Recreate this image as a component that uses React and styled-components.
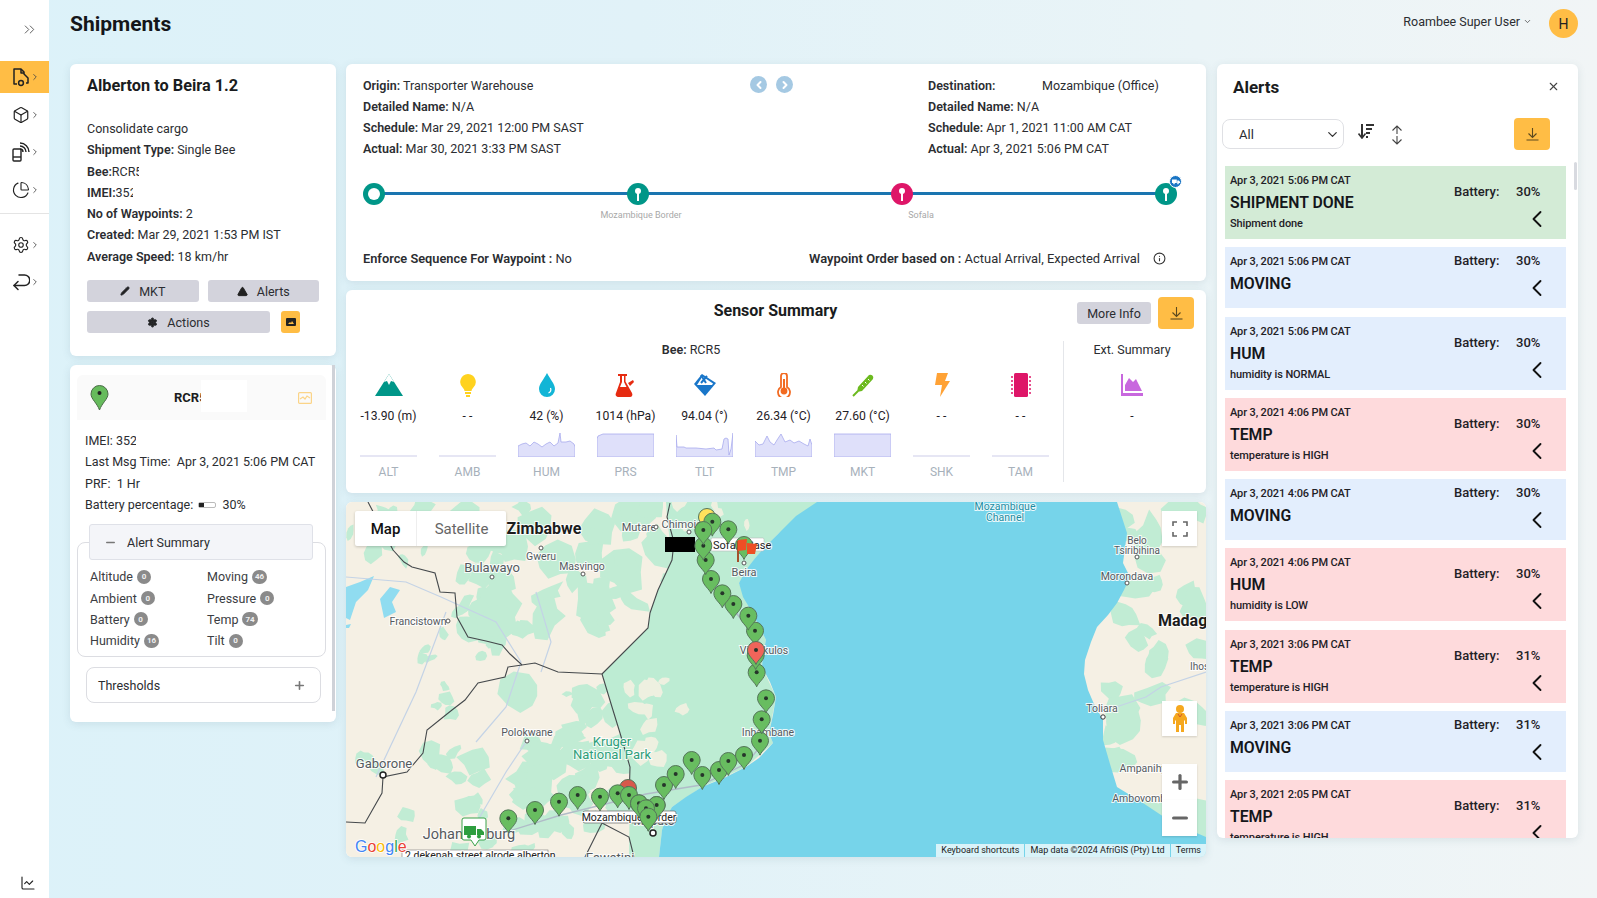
import React from 'react';
import styled, { createGlobalStyle } from 'styled-components';
import {
  ChevronsRight, ChevronRight, ChevronLeft, ChevronDown, Box, PieChart, Settings,
  ChartLine, X, Info, Minus, Plus, Pencil, TriangleAlert,
} from 'lucide-react';

const FONT = `Roboto, "Noto Sans", sans-serif`;

const GlobalStyle = createGlobalStyle`
  html, body { margin: 0; padding: 0; }
  body { font-family: ${FONT}; color: #1f2126; }
  * { box-sizing: border-box; }
`;

const alerts = [
  { time: 'Apr 3, 2021 5:06 PM CAT', title: 'SHIPMENT DONE', desc: 'Shipment done', battery: '30%', kind: 'done' },
  { time: 'Apr 3, 2021 5:06 PM CAT', title: 'MOVING', battery: '30%', kind: 'info' },
  { time: 'Apr 3, 2021 5:06 PM CAT', title: 'HUM', desc: 'humidity is NORMAL', battery: '30%', kind: 'info' },
  { time: 'Apr 3, 2021 4:06 PM CAT', title: 'TEMP', desc: 'temperature is HIGH', battery: '30%', kind: 'bad' },
  { time: 'Apr 3, 2021 4:06 PM CAT', title: 'MOVING', battery: '30%', kind: 'info' },
  { time: 'Apr 3, 2021 4:06 PM CAT', title: 'HUM', desc: 'humidity is LOW', battery: '30%', kind: 'bad' },
  { time: 'Apr 3, 2021 3:06 PM CAT', title: 'TEMP', desc: 'temperature is HIGH', battery: '31%', kind: 'bad' },
  { time: 'Apr 3, 2021 3:06 PM CAT', title: 'MOVING', battery: '31%', kind: 'info' },
  { time: 'Apr 3, 2021 2:05 PM CAT', title: 'TEMP', desc: 'temperature is HIGH', battery: '31%', kind: 'bad' },
];

const alertBg = { done: '#d3ebd6', info: '#e3eefd', bad: '#fedadc' };

const summary = [
  ['Altitude', 0], ['Moving', 46], ['Ambient', 0], ['Pressure', 0],
  ['Battery', 0], ['Temp', 74], ['Humidity', 16], ['Tilt', 0],
];

// sparkline points are in a 57x24 box
const sensors = [
  { code: 'ALT', value: '-13.90 (m)', icon: 'mountain' },
  { code: 'AMB', value: '- -', icon: 'bulb' },
  { code: 'HUM', value: '42 (%)', icon: 'drop', line: '0,13 4,11 8,10 12,13 16,9 20,11 24,14 28,11 32,9 36,13 40,10 42,0 43,9 48,9 52,8 56,11 57,14' },
  { code: 'PRS', value: '1014 (hPa)', icon: 'flask', line: '0,6 1,3 6,1 57,1' },
  { code: 'TLT', value: '94.04 (°)', icon: 'tilt', line: '0,2 1,14 8,14 10,15 20,15 30,16 38,15 40,17 46,16 48,6 50,5 52,6 53,22 55,16 57,0' },
  { code: 'TMP', value: '26.34 (°C)', icon: 'thermo', line: '0,8 4,12 8,11 12,3 15,9 19,12 22,7 26,1 30,9 35,7 39,10 44,8 49,11 53,13 55,6 57,12' },
  { code: 'MKT', value: '27.60 (°C)', icon: 'pen', line: '0,1 57,1' },
  { code: 'SHK', value: '- -', icon: 'bolt' },
  { code: 'TAM', value: '- -', icon: 'chip' },
];

const pins = [
  [490, 955], [570, 930], [642, 905], [698, 885], [765, 890], [818, 880], [852, 885], [882, 910], [935, 915],
  [903, 925], [910, 950], [957, 855], [992, 822], [1040, 780], [1072, 825], [1122, 810], [1150, 783], [1197, 765],
  [1245, 722], [1250, 658], [1263, 595], [1235, 517], [1232, 465], [1230, 392], [1210, 347], [1165, 312], [1132, 280],
  [1098, 237], [1082, 180], [1075, 137], [1102, 65], [1075, 90], [1150, 88], [1197, 135],
].map(([x, y]) => [x / 3 - 1, y / 3 - 2]);

// map texture: irregular patches scattered from a fixed seed
let seed = 20240;
const rand = () => {
  seed = (seed * 16807) % 2147483647;
  return seed / 2147483647;
};

const blobs = (count, x0, y0, x1, y1, rMin, rMax) =>
  Array.from({ length: count }, () => {
    const cx = x0 + rand() * (x1 - x0);
    const cy = y0 + rand() * (y1 - y0);
    const r = rMin + rand() * (rMax - rMin);
    const stretch = 0.45 + rand() * 0.6;
    const turn = rand() * Math.PI;
    const pts = Array.from({ length: 9 }, (_, i) => {
      const a = (i / 9) * Math.PI * 2;
      const k = r * (0.6 + rand() * 0.6);
      const px = Math.cos(a) * k;
      const py = Math.sin(a) * k * stretch;
      return `${(cx + px * Math.cos(turn) - py * Math.sin(turn)).toFixed(1)},${(cy + px * Math.sin(turn) + py * Math.cos(turn)).toFixed(1)}`;
    });
    return pts.join(' ');
  });

const greenPatches = [
  ...blobs(46, 110, 0, 325, 130, 8, 24),
  ...blobs(14, 0, 0, 110, 60, 5, 14),
  ...blobs(44, 165, 175, 285, 345, 6, 22),
  ...blobs(12, 70, 130, 170, 215, 4, 10),
  ...blobs(14, 0, 250, 150, 350, 6, 18),
  ...blobs(8, 110, 280, 190, 350, 6, 14),
  ...blobs(34, 745, 0, 860, 340, 8, 24),
];
const beigePatches = [
  ...blobs(12, 275, 140, 345, 285, 5, 15),
  ...blobs(5, 330, 0, 410, 30, 4, 9),
];

const mozambique =
  '320,0 480,0 433,31 410,55 393,81 403,105 420,138 416,165 430,195 423,231 427,241 400,265 356,285 326,305 316,328 313,355 283,355 284,265 274,231 266,205 256,172 302,126 304,111 312,88 326,58 321,15';

const ocean =
  'M471 0 L450 14 L433 31 L418 46 L410 55 L400 68 L393 81 L397 95 L403 105 L412 122 L420 138 L417 152 L416 165 L424 180 L430 195 L427 213 L423 231 L427 241 L413 256 L400 265 L378 276 L356 285 L340 295 L326 305 L320 316 L316 328 L313 355 L860 355 L860 335 L827 321 L797 301 L771 285 L764 262 L757 238 L757 218 L748 202 L742 188 L738 172 L739 158 L745 140 L751 125 L762 113 L771 101 L778 88 L784 75 L777 61 L781 31 L771 0z';

const borders = [
  'M324,1 L321,15 L328,40 L326,58 L312,88 L304,111 L302,126 L256,172',
  'M22,0 L35,25 L47,48 L58,60 L66,65 L89,71 L94,90 L109,91 L111,115 L122,135 L140,139 L156,143 L164,152 L176,163 L189,161 L212,170 L256,172',
  'M176,163 L162,165 L159,175 L132,181 L119,198 L106,208 L96,216 L81,228 L77,251 L61,270 L37,275 L36,291 L19,321 L0,320',
  'M256,172 L266,205 L274,231 L284,265 L283,300',
  'M239,355 L256,321 L283,335 L288,355',
];

const roads = [
  'M0,75 L60,80 L95,95 L150,120 L175,160 L160,205 L130,240',
  'M100,110 L70,190 L30,275',
  'M180,240 L160,270 L125,330',
  'M190,90 L205,140 L195,170',
  'M365,70 L375,95 L415,135',
  'M770,205 L800,195 L815,185 L860,170',
];

const AreaChart = ({ line }) => (
  <SparkSvg viewBox="0 0 57 24">
    {line ? (
      <polygon points={`${line} 57,24 0,24`} fill="#dfe0fa" stroke="#a8abee" strokeWidth="0.8" />
    ) : (
      <rect x="0" y="22" width="57" height="2" fill="#e6e6f4" />
    )}
  </SparkSvg>
);

const SensorIcon = ({ name }) => {
  switch (name) {
    case 'mountain':
      return (
        <svg width="30" height="24" viewBox="0 0 30 24">
          <path d="M15 1 L29 23 H1 Z" fill="#009688" />
          <path d="M15 1 L20 9 L17 8 L15 12 L13 8 L10 9 Z" fill="#fff" />
        </svg>
      );
    case 'bulb':
      return (
        <svg width="18" height="24" viewBox="0 0 18 24">
          <path d="M9 1a8 8 0 0 0-5 14c1 1 1.5 2 1.5 3h7c0-1 .5-2 1.5-3A8 8 0 0 0 9 1z" fill="#ffd21f" />
          <rect x="6" y="19" width="6" height="2" fill="#ffd21f" />
          <rect x="7" y="22" width="4" height="2" fill="#ffd21f" />
        </svg>
      );
    case 'drop':
      return (
        <svg width="18" height="24" viewBox="0 0 18 24">
          <path d="M9 0 C12 6 17 11 17 16 A8 8 0 0 1 1 16 C1 11 6 6 9 0z" fill="#12b5d6" />
          <path d="M12.5 15a4 4 0 0 1-2 5" stroke="#fff" strokeWidth="1.2" fill="none" />
        </svg>
      );
    case 'flask':
      return (
        <svg width="22" height="24" viewBox="0 0 22 24">
          <path d="M3 1h9v2h-1.5v5.5L17 20c1 2 0 4-2 4H4c-3 0-4-2-3-4L5 9V3H3z" fill="#e62b11" />
          <path d="M7 3h2v6l2.5 5H5l2-5z" fill="#fff" />
          <path d="M13 10l5-3 1 2-4 4z" fill="#e62b11" />
        </svg>
      );
    case 'tilt':
      return (
        <svg width="24" height="24" viewBox="0 0 24 24">
          <path d="M9 1 L23 10 L12 23 L1 11z" fill="#1976c9" />
          <path d="M9.5 3.5 L20 10.5 L19 12 L4 12z" fill="#fff" />
          <path d="M8 2 L13 10 M14 3 L8 10" stroke="#1976c9" strokeWidth="2" />
        </svg>
      );
    case 'thermo':
      return (
        <svg width="14" height="24" viewBox="0 0 14 24">
          <path d="M4 3a3 3 0 0 1 6 0v11a6 6 0 1 1-6 0z" fill="#fff" stroke="#f26a21" strokeWidth="1.8" />
          <rect x="6" y="6" width="2" height="10" fill="#f26a21" />
          <circle cx="7" cy="18" r="3.4" fill="#f26a21" />
        </svg>
      );
    case 'pen':
      return (
        <svg width="24" height="24" viewBox="0 0 24 24">
          <path d="M7 14 L18 2 a3 3 0 0 1 4 4 L11 18 L6 19z" fill="#6cba1f" />
          <path d="M7 18 L2 23" stroke="#6cba1f" strokeWidth="2" />
          <path d="M11 12l1.5 1.5M14 9l1.5 1.5M17 6l1.5 1.5" stroke="#fff" strokeWidth="1" />
        </svg>
      );
    case 'bolt':
      return (
        <svg width="18" height="24" viewBox="0 0 18 24">
          <path d="M4 0 H15 L12 8 H17 L7 24 L9 12 H2z" fill="#ffa235" />
        </svg>
      );
    case 'chip':
      return (
        <svg width="24" height="24" viewBox="0 0 24 24">
          <rect x="5" y="0" width="14" height="24" rx="1.5" fill="#de1668" />
          <path d="M2 4h2M2 8h2M2 12h2M2 16h2M2 20h2M20 4h2M20 8h2M20 12h2M20 16h2M20 20h2" stroke="#de1668" strokeWidth="1.6" />
        </svg>
      );
    default:
      return (
        <svg width="24" height="24" viewBox="0 0 24 24">
          <path d="M1 1h2v19h20v3H1z" fill="#c868de" />
          <path d="M5 18 V12 L9 5 L13 9 L16 6 L22 18z" fill="#c868de" />
        </svg>
      );
  }
};

const MapPin = ({ x, y, fill = '#68bd60', dot = '#26352a' }) => (
  <g transform={`translate(${x} ${y})`}>
    <path
      d="M0 14.5 C-1.5 10 -8.5 6 -8.5 0 A8.5 8.5 0 0 1 8.5 0 C8.5 6 1.5 10 0 14.5z"
      fill={fill}
      stroke="#55755a"
      strokeWidth="1"
    />
    <circle cx="0" cy="0" r="2" fill={dot} />
  </g>
);

const TruckGlyph = ({ color, size = 16 }) => (
  <svg width={size} height={size * 0.7} viewBox="0 0 20 14">
    <path d="M0 1h12v9H0z M13 4h4l3 3v3h-7z" fill={color} />
    <circle cx="5" cy="11.5" r="2" fill={color} />
    <circle cx="15" cy="11.5" r="2" fill={color} />
  </svg>
);

const MapDrawing = () => (
  <MapSvg viewBox="0 0 860 355">
    <rect width="860" height="355" fill="#f5f0e4" />
    {greenPatches.map((p, i) => (
      <polygon key={i} points={p} fill="#c1ecd4" />
    ))}
    <polygon points={mozambique} fill="#bdecd3" />
    {beigePatches.map((p, i) => (
      <polygon key={i} points={p} fill="#eef0e0" />
    ))}
    <path d={ocean} fill="#76d4ea" />
    <path d="M0 85 L14 80 L28 74 L22 88 L10 100 L4 118 L0 116z M34 97 L44 85 L54 88 L46 100 L50 110 L38 116z" fill="#90dcf0" />
    <path d="M0 123 L5 122 L3 126 L0 126z" fill="#90dcf0" />
    {roads.map((d, i) => (
      <path key={i} d={d} fill="none" stroke="#c4d3e6" strokeWidth="1.2" />
    ))}
    <path d="M160 330 L215 313 L300 292 L355 283 L400 262 L418 240 M370 85 L405 130" fill="none" stroke="#b0bcc8" strokeWidth="1.4" />
    {borders.map((d, i) => (
      <path key={i} d={d} fill="none" stroke="#45494c" strokeWidth="1.1" />
    ))}

    <MapLabel x="198" y="32" $size={16} $weight={700} $color="#1c1c1c">Zimbabwe</MapLabel>
    <MapLabel x="293" y="29" $size={11}>Mutare</MapLabel>
    <MapLabel x="336" y="26" $size={11}>Chimoio</MapLabel>
    <MapLabel x="195" y="58" $size={10.5}>Gweru</MapLabel>
    <MapLabel x="236" y="68" $size={10.5}>Masvingo</MapLabel>
    <MapLabel x="146" y="70" $size={13}>Bulawayo</MapLabel>
    <MapLabel x="72" y="123" $size={10.5}>Francistown</MapLabel>
    <MapLabel x="398" y="74" $size={11}>Beira</MapLabel>
    <MapLabel x="418" y="152" $size={10.5}>Vilankulos</MapLabel>
    <MapLabel x="422" y="234" $size={10.5}>Inhambane</MapLabel>
    <MapLabel x="181" y="234" $size={10.5}>Polokwane</MapLabel>
    <MapLabel x="266" y="244" $size={13} $color="#2e9e7a">Kruger</MapLabel>
    <MapLabel x="266" y="257" $size={13} $color="#2e9e7a">National Park</MapLabel>
    <MapLabel x="38" y="266" $size={13}>Gaborone</MapLabel>
    <MapLabel x="123" y="337" $size={14.5}>Johannesburg</MapLabel>
    <MapLabel x="264" y="360" $size={13}>Eswatini</MapLabel>
    <MapLabel x="659" y="8" $size={10.5} $color="#1b8da3">Mozambique</MapLabel>
    <MapLabel x="659" y="19" $size={10.5} $color="#1b8da3">Channel</MapLabel>
    <MapLabel x="791" y="42" $size={10}>Belo</MapLabel>
    <MapLabel x="791" y="52" $size={10}>Tsiribihina</MapLabel>
    <MapLabel x="781" y="78" $size={10.5}>Morondava</MapLabel>
    <MapLabel x="812" y="124" $size={16} $weight={700} $color="#1c1c1c" $anchor="start">Madagascar</MapLabel>
    <MapLabel x="844" y="168" $size={10} $anchor="start">Ihosy</MapLabel>
    <MapLabel x="756" y="210" $size={10.5}>Toliara</MapLabel>
    <MapLabel x="797" y="270" $size={10.5}>Ampanihy</MapLabel>
    <MapLabel x="796" y="300" $size={10.5}>Ambovombe</MapLabel>
    <MapLabel x="308" y="323" $size={12}>Maputo</MapLabel>

    <circle cx="146" cy="75" r="2" fill="#fff" stroke="#555" />
    <circle cx="102" cy="119" r="2" fill="#fff" stroke="#555" />
    <circle cx="195" cy="46" r="2" fill="#fff" stroke="#555" />
    <circle cx="237" cy="72" r="2" fill="#fff" stroke="#555" />
    <circle cx="181" cy="239" r="2" fill="#fff" stroke="#555" />
    <circle cx="310" cy="25" r="2" fill="#fff" stroke="#555" />
    <circle cx="343" cy="30" r="2" fill="#fff" stroke="#555" />
    <circle cx="398" cy="61" r="2" fill="#fff" stroke="#555" />
    <circle cx="781" cy="81" r="2" fill="#fff" stroke="#555" />
    <circle cx="791" cy="55" r="2" fill="#fff" stroke="#555" />
    <circle cx="757" cy="215" r="2.2" fill="#fff" stroke="#333" />
    <circle cx="37" cy="273" r="3" fill="#fff" stroke="#222" strokeWidth="1.5" />
    <circle cx="307" cy="331" r="3" fill="#fff" stroke="#222" strokeWidth="1.5" />

    <rect x="365" y="36" width="53" height="13" fill="#fff" stroke="#bbb" strokeWidth="0.6" rx="1.5" />
    <MapLabel x="367" y="46.5" $size={11} $anchor="start" $color="#222">Sofala Base</MapLabel>
    <rect x="319" y="35" width="30" height="15" fill="#000" />

    <MapPin x={361} y={15} fill="#ffe25c" dot="#ffe25c" />
    <MapPin x={282} y={286} fill="#d8584b" />
    <MapPin x={300} y={306} fill="#e07068" />
    {pins.map(([x, y], i) => (
      <MapPin key={i} x={x} y={y} />
    ))}
    <MapPin x={410} y={148} fill="#f0645a" />

    <path d="M392 39 L392 60" stroke="#a4512a" strokeWidth="2" />
    <path d="M392 38 L401 37 L400 48 L392 49z" fill="#ee4f25" />
    <path d="M401 41 L411 42 L409 52 L401 52z" fill="#ee4f25" />

    <rect x="237" y="309" width="93" height="12" fill="#fff" stroke="#666" strokeWidth="0.7" rx="2" />
    <MapLabel x="283" y="318.5" $size={10.5} $color="#222">Mozambique Border</MapLabel>
    {pins.slice(7, 11).map(([x, y], i) => (
      <MapPin key={i} x={x} y={y} />
    ))}

    <path d="M118 316 h20 a2 2 0 0 1 2 2 v18 a2 2 0 0 1 -2 2 h-5 l-4 6 l-4 -6 h-7 a2 2 0 0 1 -2 -2 v-18 a2 2 0 0 1 2 -2z" fill="#fff" stroke="#3aa24a" strokeWidth="1" />
    <g transform="translate(118 323)">
      <TruckGlyph color="#2e9e3f" size={20} />
    </g>

    <rect x="56" y="348" width="146" height="12" fill="#fff" stroke="#777" strokeWidth="0.6" />
    <MapLabel x="59" y="357" $size={10.5} $anchor="start" $color="#222">2 dekenah street alrode alberton</MapLabel>
    <GoogleLogo x="9" y="350">
      <tspan fill="#4285f4">G</tspan>
      <tspan fill="#ea4335">o</tspan>
      <tspan fill="#fbbc05">o</tspan>
      <tspan fill="#4285f4">g</tspan>
      <tspan fill="#34a853">l</tspan>
      <tspan fill="#ea4335">e</tspan>
    </GoogleLogo>
  </MapSvg>
);

const Pegman = () => (
  <svg width="16" height="27" viewBox="0 0 16 27">
    <circle cx="8" cy="4" r="4" fill="#f5a81f" />
    <path d="M4 8h8l3 5v6h-2v-4l-1 1v11H9v-7H7v7H4V16l-1-1v4H1v-6z" fill="#f5a81f" />
    <path d="M6 9l2 3 2-3" stroke="#d3562a" strokeWidth="1" fill="none" />
  </svg>
);

const FullscreenGlyph = () => (
  <svg width="16" height="16" viewBox="0 0 16 16" fill="none" stroke="#666" strokeWidth="1.6">
    <path d="M1 5V1h4M11 1h4v4M15 11v4h-4M5 15H1v-4" />
  </svg>
);

const DeliveryIcon = () => (
  <svg width="18" height="20" viewBox="0 0 18 20" fill="none" stroke="#222" strokeWidth="1.5" strokeLinejoin="round">
    <path d="M5 17H2V2h7l3 3v2l4 4v5h-2" />
    <path d="M9 2v4h3" />
    <circle cx="9" cy="16" r="2.4" />
  </svg>
);

const DeviceIcon = () => (
  <svg width="18" height="20" viewBox="0 0 18 20" fill="none" stroke="#222" strokeWidth="1.4">
    <rect x="1" y="7" width="8" height="12" rx="1" />
    <path d="M1 15h8" />
    <path d="M8 4a6 6 0 0 1 6 6M8 1a9 9 0 0 1 9 9M8 7a3 3 0 0 1 3 3" />
  </svg>
);

const ReturnIcon = () => (
  <svg width="18" height="18" viewBox="0 0 18 18" fill="none" stroke="#222" strokeWidth="1.5" strokeLinecap="round" strokeLinejoin="round">
    <path d="M7 2h5.5a5 5 0 0 1 0 10.5H2" />
    <path d="M6 8.5l-4 4 4 4" />
  </svg>
);

const SortIcon = () => (
  <svg width="16" height="15" viewBox="0 0 16 15" fill="none" stroke="#333">
    <path d="M4 0v13" strokeWidth="2" />
    <path d="M0.5 9.5L4 14l3.5-4.5" strokeWidth="1.6" />
    <path d="M8 1h8M8 5h6M8 9h4M8 13h2" strokeWidth="1.8" />
  </svg>
);

const UpDownIcon = () => (
  <svg width="12" height="20" viewBox="0 0 12 20" fill="none" stroke="#444" strokeWidth="1.1">
    <path d="M6 1v8M1.5 5.5L6 1l4.5 4.5" />
    <path d="M6 11v8M1.5 14.5L6 19l4.5-4.5" />
  </svg>
);

const DownloadIcon = () => (
  <svg width="13" height="14" viewBox="0 0 13 14" fill="none" stroke="#5c4a1f" strokeWidth="1.1">
    <path d="M6.5 1v9.5M2.5 6.5l4 4 4-4" />
    <path d="M0.5 13h12" />
  </svg>
);

const App = () => (
  <>
    <GlobalStyle />
    <Page>
      <Sidebar>
        <CollapseRow><ChevronsRight size={17} strokeWidth={1.2} color="#444" /></CollapseRow>
        <NavGroup>
          <NavItem $active><DeliveryIcon /><ChevronRight size={10} color="#444" /></NavItem>
          <NavItem><Box size={18} strokeWidth={1.6} color="#222" /><ChevronRight size={10} color="#444" /></NavItem>
          <NavItem><DeviceIcon /><ChevronRight size={10} color="#444" /></NavItem>
          <NavItem><PieChart size={18} strokeWidth={1.5} color="#222" /><ChevronRight size={10} color="#444" /></NavItem>
        </NavGroup>
        <NavGroup $second>
          <NavItem><Settings size={18} strokeWidth={1.5} color="#222" /><ChevronRight size={10} color="#444" /></NavItem>
          <NavItem><ReturnIcon /><ChevronRight size={10} color="#444" /></NavItem>
        </NavGroup>
        <SidebarFoot><ChartLine size={16} strokeWidth={1.7} color="#222" /></SidebarFoot>
      </Sidebar>

      <Main>
        <Header>
          <PageTitle>Shipments</PageTitle>
          <UserArea>
            <UserName>Roambee Super User</UserName>
            <ChevronDown size={9} color="#444" />
            <Avatar>H</Avatar>
          </UserArea>
        </Header>

        <Columns>
          <LeftColumn>
            <InfoCard>
              <CardTitle>Alberton to Beira 1.2</CardTitle>
              <InfoLines>
                <InfoLine>Consolidate cargo</InfoLine>
                <InfoLine><b>Shipment Type:</b> Single Bee</InfoLine>
                <InfoLine><b>Bee:</b><CutValue $w={27}>RCR5</CutValue></InfoLine>
                <InfoLine><b>IMEI:</b><CutValue $w={17}>352</CutValue></InfoLine>
                <InfoLine><b>No of Waypoints:</b> 2</InfoLine>
                <InfoLine><b>Created:</b> Mar 29, 2021 1:53 PM IST</InfoLine>
                <InfoLine><b>Average Speed:</b> 18 km/hr</InfoLine>
              </InfoLines>
              <ButtonRow>
                <GreyButton $grow><Pencil size={10} fill="#222" />MKT</GreyButton>
                <GreyButton $grow><TriangleAlert size={11} fill="#222" color="#222" />Alerts</GreyButton>
              </ButtonRow>
              <ButtonRow>
                <GreyButton $wide><Settings size={11} fill="#222" />Actions</GreyButton>
                <SmallOrange>
                  <svg width="10" height="8" viewBox="0 0 10 8"><rect width="10" height="8" rx="1" fill="#222" /><path d="M2 6l2-2 1 1 1-2 2 3z" fill="#ffbd45" /></svg>
                </SmallOrange>
              </ButtonRow>
            </InfoCard>

            <DeviceCard>
              <DeviceHead>
                <svg width="19" height="26" viewBox="0 0 19 26">
                  <path d="M9.5 25 C7 18 1 14 1 9 A8.5 8.5 0 0 1 18 9 C18 14 12 18 9.5 25z" fill="#66bb5c" stroke="#4b6b48" />
                  <circle cx="9.5" cy="8" r="2" fill="#222" />
                </svg>
                <DeviceName>RCR5</DeviceName>
                <MaskBlock />
                <svg width="14" height="12" viewBox="0 0 14 12" fill="none" stroke="#fbd488" strokeWidth="1.2">
                  <rect x="0.6" y="0.6" width="12.8" height="10.8" rx="1" />
                  <path d="M2 7l3-2 2 2 2-3 3 2" />
                </svg>
              </DeviceHead>
              <DeviceLines>
                <DeviceLine>IMEI: <CutValue $w={20}>352</CutValue></DeviceLine>
                <DeviceLine>Last Msg Time:&nbsp; Apr 3, 2021 5:06 PM CAT</DeviceLine>
                <DeviceLine>PRF:&nbsp; 1 Hr</DeviceLine>
                <DeviceLine>
                  Battery percentage:&nbsp;
                  <BatteryShell><BatteryFill style={{ width: '30%' }} /></BatteryShell>
                  &nbsp;&nbsp;30%
                </DeviceLine>
              </DeviceLines>
              <SummaryWrap>
                <SummaryToggle><Minus size={13} color="#777" strokeWidth={2.5} />Alert Summary</SummaryToggle>
                <SummaryBox>
                  {summary.map(([name, count]) => (
                    <SummaryItem key={name}>{name}<CountBadge>{count}</CountBadge></SummaryItem>
                  ))}
                </SummaryBox>
              </SummaryWrap>
              <ThresholdRow>Thresholds<Plus size={13} color="#777" strokeWidth={3} /></ThresholdRow>
              <CardScrollbar />
            </DeviceCard>
          </LeftColumn>

          <MiddleColumn>
            <RouteCard>
              <RouteHead>
                <div>
                  <RouteLine><b>Origin:</b> Transporter Warehouse</RouteLine>
                  <RouteLine><b>Detailed Name:</b> N/A</RouteLine>
                  <RouteLine><b>Schedule:</b> Mar 29, 2021 12:00 PM SAST</RouteLine>
                  <RouteLine><b>Actual:</b> Mar 30, 2021 3:33 PM SAST</RouteLine>
                </div>
                <Pager>
                  <PageDot><ChevronLeft size={12} strokeWidth={4} color="#fff" /></PageDot>
                  <PageDot><ChevronRight size={12} strokeWidth={4} color="#fff" /></PageDot>
                </Pager>
                <div>
                  <RouteLine><DestLabel>Destination:</DestLabel>Mozambique (Office)</RouteLine>
                  <RouteLine><b>Detailed Name:</b> N/A</RouteLine>
                  <RouteLine><b>Schedule:</b> Apr 1, 2021 11:00 AM CAT</RouteLine>
                  <RouteLine><b>Actual:</b> Apr 3, 2021 5:06 PM CAT</RouteLine>
                </div>
              </RouteHead>
              <Timeline>
                <TimelineBar />
                <TimeNode $color="#009688"><NodeRing /></TimeNode>
                <TimeNode $color="#009688">
                  <NodePin />
                  <NodeLabel $dx={3}>Mozambique Border</NodeLabel>
                </TimeNode>
                <TimeNode $color="#de1668">
                  <NodePin />
                  <NodeLabel $dx={19}>Sofala</NodeLabel>
                </TimeNode>
                <TimeNode $color="#009688">
                  <NodePin />
                  <TruckBadge><TruckGlyph color="#fff" size={8} /></TruckBadge>
                </TimeNode>
              </Timeline>
              <RouteFoot>
                <span><b>Enforce Sequence For Waypoint :</b> No</span>
                <RouteFootRight>
                  <span><b>Waypoint Order based on :</b> Actual Arrival, Expected Arrival</span>
                  <Info size={13} color="#333" />
                </RouteFootRight>
              </RouteFoot>
            </RouteCard>

            <SensorCard>
              <SensorHead>
                <SensorTitle>Sensor Summary</SensorTitle>
                <SensorActions>
                  <MoreButton>More Info</MoreButton>
                  <OrangeButton $w={36} $h={32}><DownloadIcon /></OrangeButton>
                </SensorActions>
              </SensorHead>
              <SensorBody>
                <SensorMain>
                  <BeeLine><b>Bee:</b> RCR5</BeeLine>
                  <SensorGrid>
                    {sensors.map((s) => (
                      <SensorCell key={s.code}>
                        <IconSlot><SensorIcon name={s.icon} /></IconSlot>
                        <SensorValue>{s.value}</SensorValue>
                        <AreaChart line={s.line} />
                        <SensorCode>{s.code}</SensorCode>
                      </SensorCell>
                    ))}
                  </SensorGrid>
                </SensorMain>
                <ExtSummary>
                  <ExtTitle>Ext. Summary</ExtTitle>
                  <IconSlot><SensorIcon name="ext" /></IconSlot>
                  <SensorValue>-</SensorValue>
                </ExtSummary>
              </SensorBody>
            </SensorCard>

            <MapCard>
              <MapDrawing />
              <MapTabs>
                <MapTab $active>Map</MapTab>
                <MapTab>Satellite</MapTab>
              </MapTabs>
              <MapControls>
                <MapControl><FullscreenGlyph /></MapControl>
                <MapSpacer $h={155} />
                <MapControl><Pegman /></MapControl>
                <MapSpacer $h={28} />
                <MapControl $h={36}><Plus size={22} strokeWidth={3.5} color="#666" /></MapControl>
                <MapControl $h={36}><Minus size={22} strokeWidth={3.5} color="#666" /></MapControl>
              </MapControls>
              <Attribution>
                <AttrCell>Keyboard shortcuts</AttrCell>
                <AttrCell>Map data ©2024 AfriGIS (Pty) Ltd</AttrCell>
                <AttrCell>Terms</AttrCell>
              </Attribution>
            </MapCard>
          </MiddleColumn>

          <AlertsPanel>
            <AlertsHead>
              <AlertsTitle>Alerts</AlertsTitle>
              <X size={13} color="#444" />
            </AlertsHead>
            <AlertsTools>
              <FilterSelect>All<ChevronDown size={15} color="#333" /></FilterSelect>
              <SortSlot $top={-3} $left={14}><SortIcon /></SortSlot>
              <SortSlot $top={1} $left={17}><UpDownIcon /></SortSlot>
              <OrangeButton $w={36} $h={32} $push><DownloadIcon /></OrangeButton>
            </AlertsTools>
            <AlertList>
              {alerts.map((a, i) => (
                <AlertItem key={i} $bg={alertBg[a.kind]} $tall={!!a.desc}>
                  <AlertText>
                    <AlertTime>{a.time}</AlertTime>
                    <AlertName>{a.title}</AlertName>
                    {a.desc && <AlertDesc>{a.desc}</AlertDesc>}
                  </AlertText>
                  <AlertSide>
                    <BatteryRow><span>Battery:</span><span>{a.battery}</span></BatteryRow>
                    <AlertChevron><ChevronLeft size={28} strokeWidth={1.6} color="#111" /></AlertChevron>
                  </AlertSide>
                </AlertItem>
              ))}
              <ListScrollbar />
            </AlertList>
          </AlertsPanel>
        </Columns>
      </Main>
    </Page>
  </>
);

export default App;

const Page = styled.div`
  width: 1597px;
  height: 898px;
  display: flex;
  overflow: hidden;
  background: linear-gradient(90deg, #dcf2f9 0%, #e1f2f8 40%, #eaf4f7 75%, #f1f5f6 100%);
`;

const Sidebar = styled.aside`
  width: 49px;
  flex: none;
  background: #fff;
  display: flex;
  flex-direction: column;
`;

const CollapseRow = styled.div`
  height: 61px;
  display: flex;
  align-items: center;
  justify-content: flex-end;
  padding: 0 11px 3px 0;
`;

const NavGroup = styled.div`
  display: flex;
  flex-direction: column;
  gap: 5.6px;
  padding-bottom: ${({ $second }) => ($second ? '0' : '7px')};
  padding-top: ${({ $second }) => ($second ? '15px' : '0')};
  border-bottom: ${({ $second }) => ($second ? 'none' : '1px solid #e4e4e4')};
`;

const NavItem = styled.div`
  height: 32px;
  display: flex;
  align-items: center;
  padding-left: 12px;
  background: ${({ $active }) => ($active ? '#ffbd45' : 'transparent')};
`;

const SidebarFoot = styled.div`
  margin-top: auto;
  padding: 0 0 3px 20px;
`;

const Main = styled.main`
  flex: 1;
  min-width: 0;
  padding-left: 21px;
  display: flex;
  flex-direction: column;
`;

const Header = styled.header`
  height: 64px;
  flex: none;
  display: flex;
  justify-content: space-between;
  align-items: flex-start;
  padding: 9px 19px 0 0;
`;

const PageTitle = styled.h1`
  margin: 0;
  font-size: 21px;
  line-height: 31px;
  font-weight: 700;
  color: #14161a;
`;

const UserArea = styled.div`
  display: flex;
  align-items: center;
  gap: 3px;
  margin-top: -1px;
  & > svg { margin-bottom: 4px; }
`;

const UserName = styled.span`
  font-size: 12.5px;
  margin-bottom: 4px;
  color: #2b2d31;
`;

const Avatar = styled.div`
  width: 29px;
  height: 29px;
  margin: 1px 0 0 14px;
  border-radius: 50%;
  background: #ffbd45;
  display: flex;
  align-items: center;
  justify-content: center;
  font-size: 14px;
  color: #222;
`;

const Columns = styled.div`
  display: flex;
  align-items: flex-start;
  gap: 10px;
`;

const LeftColumn = styled.div`
  width: 266px;
  flex: none;
  display: flex;
  flex-direction: column;
  gap: 9px;
`;

const Card = styled.section`
  background: #fff;
  border-radius: 6px;
  box-shadow: 0 2px 8px rgba(60, 90, 110, 0.12);
`;

const InfoCard = styled(Card)`
  height: 292px;
  padding: 12px 17px;
`;

const CardTitle = styled.h2`
  margin: 0;
  font-size: 16.3px;
  line-height: 20px;
  font-weight: 700;
  color: #1a1c20;
`;

const InfoLines = styled.div`
  margin: 22px 0 13px;
`;

const InfoLine = styled.div`
  display: flex;
  font-size: 12.5px;
  line-height: 21.3px;
  color: #2b2d31;
  white-space: pre;
  b { font-weight: 600; }
`;

const CutValue = styled.span`
  display: inline-block;
  width: ${({ $w }) => $w}px;
  overflow: hidden;
  white-space: nowrap;
`;

const ButtonRow = styled.div`
  display: flex;
  gap: 9px;
  margin-bottom: 9px;
`;

const GreyButton = styled.div`
  height: 22px;
  flex: ${({ $grow }) => ($grow ? '1' : 'none')};
  width: ${({ $wide }) => ($wide ? '183px' : 'auto')};
  background: #d3d3dc;
  border-radius: 3px;
  display: flex;
  align-items: center;
  justify-content: center;
  gap: 9px;
  font-size: 12.5px;
  color: #2b2d31;
`;

const SmallOrange = styled.div`
  width: 19px;
  height: 22px;
  margin-left: 2px;
  background: #ffbd45;
  border-radius: 3px;
  display: flex;
  align-items: center;
  justify-content: center;
`;

const DeviceCard = styled(Card)`
  position: relative;
  height: 357px;
  padding: 10px 10px 0 7px;
`;

const CardScrollbar = styled.div`
  position: absolute;
  right: 1px;
  top: 0;
  width: 3px;
  height: 346px;
  background: #cfd2d8;
`;

const DeviceHead = styled.div`
  position: relative;
  height: 45px;
  background: #fafafa;
  display: flex;
  align-items: center;
  padding: 0 9px 0 13px;
  border-radius: 6px 6px 0 0;
`;

const DeviceName = styled.span`
  margin-left: 65px;
  width: 124px;
  font-size: 13px;
  font-weight: 700;
  color: #1a1c20;
`;

const MaskBlock = styled.div`
  position: absolute;
  left: 124px;
  top: 5px;
  width: 46px;
  height: 32px;
  background: #fff;
`;

const DeviceLines = styled.div`
  padding: 10px 0 0 8px;
`;

const DeviceLine = styled.div`
  display: flex;
  align-items: center;
  font-size: 12.5px;
  line-height: 21.3px;
  color: #2b2d31;
  white-space: pre;
`;

const BatteryShell = styled.div`
  width: 18px;
  height: 6px;
  border: 1px solid #bbb;
  border-radius: 2px;
  margin-left: 2px;
`;

const BatteryFill = styled.div`
  height: 100%;
  background: #222;
`;

const SummaryWrap = styled.div`
  position: relative;
  margin-top: 9px;
  padding-top: 18px;
`;

const SummaryToggle = styled.div`
  position: absolute;
  left: 12px;
  top: 0;
  width: 224px;
  height: 36px;
  background: #f4f5f9;
  border: 1px solid #dfe1e8;
  border-radius: 3px;
  display: flex;
  align-items: center;
  gap: 10px;
  padding-left: 14px;
  font-size: 12.5px;
  color: #2b2d31;
`;

const SummaryBox = styled.div`
  width: 249px;
  height: 115px;
  border: 1px solid #dcdde2;
  border-radius: 8px;
  display: grid;
  grid-template-columns: 117px 1fr;
  grid-auto-rows: 21.3px;
  padding: 23px 0 0 12px;
`;

const SummaryItem = styled.div`
  display: flex;
  align-items: center;
  gap: 4px;
  font-size: 12.5px;
  color: #3b3d42;
`;

const CountBadge = styled.span`
  min-width: 14px;
  height: 14px;
  padding: 0 3px;
  border-radius: 7px;
  background: #8a8a8a;
  color: #f0f0f0;
  font-size: 8px;
  font-weight: 700;
  display: inline-flex;
  align-items: center;
  justify-content: center;
`;

const ThresholdRow = styled.div`
  width: 235px;
  height: 36px;
  margin: 10px 0 0 9px;
  border: 1px solid #dcdde2;
  border-radius: 8px;
  display: flex;
  align-items: center;
  justify-content: space-between;
  padding: 0 14px 0 11px;
  font-size: 12.5px;
  color: #2b2d31;
`;

const MiddleColumn = styled.div`
  width: 860px;
  flex: none;
  display: flex;
  flex-direction: column;
  gap: 9px;
`;

const RouteCard = styled(Card)`
  height: 217px;
  padding: 11px 16px 11px 17px;
  display: flex;
  flex-direction: column;
`;

const RouteHead = styled.div`
  display: grid;
  grid-template-columns: 387px 44px 1fr;
  align-items: start;
  & > div:last-child { padding-left: 134px; }
`;

const RouteLine = styled.div`
  font-size: 12.5px;
  line-height: 21.1px;
  color: #2b2d31;
  white-space: nowrap;
  b { font-weight: 600; }
`;

const DestLabel = styled.b`
  display: inline-block;
  width: 114px;
`;

const Pager = styled.div`
  display: flex;
  gap: 9px;
  margin-top: 1px;
`;

const PageDot = styled.div`
  width: 17px;
  height: 17px;
  border-radius: 50%;
  background: #a5c9e3;
  display: flex;
  align-items: center;
  justify-content: center;
`;

const Timeline = styled.div`
  position: relative;
  margin-top: 24px;
  display: flex;
  justify-content: space-between;
  height: 22px;
  width: 814px;
`;

const TimelineBar = styled.div`
  position: absolute;
  left: 10px;
  right: 10px;
  top: 9px;
  height: 3px;
  background: #1a75b0;
`;

const TimeNode = styled.div`
  position: relative;
  width: 22px;
  height: 22px;
  border-radius: 50%;
  background: ${({ $color }) => $color};
  display: flex;
  align-items: center;
  justify-content: center;
`;

const NodeRing = styled.div`
  width: 12px;
  height: 12px;
  border-radius: 50%;
  background: #fff;
`;

const NodePin = styled.div`
  width: 6px;
  height: 6px;
  margin-top: -7px;
  border-radius: 50%;
  background: #fff;
  &::after {
    content: '';
    display: block;
    width: 2px;
    height: 8px;
    margin: 5px auto 0;
    background: #fff;
  }
`;

const NodeLabel = styled.span`
  position: absolute;
  top: 27px;
  left: 50%;
  transform: translateX(calc(-50% + ${({ $dx }) => $dx}px));
  white-space: nowrap;
  font-size: 9px;
  color: #a8a8a8;
`;

const TruckBadge = styled.div`
  position: absolute;
  right: -5px;
  top: -8px;
  width: 13px;
  height: 13px;
  border-radius: 50%;
  background: #1a75c4;
  display: flex;
  align-items: center;
  justify-content: center;
  border: 1px solid #fff;
`;

const RouteFoot = styled.div`
  margin-top: auto;
  display: flex;
  justify-content: space-between;
  align-items: center;
  width: 803px;
  font-size: 12.8px;
  padding-bottom: 4px;
  color: #2b2d31;
  b { font-weight: 600; }
`;

const RouteFootRight = styled.div`
  display: flex;
  align-items: center;
  gap: 13px;
  font-size: 12.95px;
`;

const SensorCard = styled(Card)`
  height: 203px;
  padding: 7px 12px 10px 3px;
`;

const SensorHead = styled.div`
  position: relative;
  height: 32px;
  display: flex;
  align-items: center;
  justify-content: center;
  padding-left: 8px;
`;

const SensorTitle = styled.h3`
  margin: 0 0 6px 0;
  font-size: 16px;
  font-weight: 700;
  color: #1a1c20;
`;

const SensorActions = styled.div`
  position: absolute;
  right: 0;
  top: 0;
  display: flex;
  align-items: center;
  gap: 7px;
`;

const MoreButton = styled.div`
  width: 74px;
  height: 22px;
  background: #d3d3dc;
  border-radius: 3px;
  display: flex;
  align-items: center;
  justify-content: center;
  font-size: 12.5px;
  color: #2b2d31;
`;

const OrangeButton = styled.div`
  width: ${({ $w }) => $w}px;
  height: ${({ $h }) => $h}px;
  margin-left: ${({ $push }) => ($push ? 'auto' : '0')};
  background: #ffbd45;
  border-radius: 4px;
  display: flex;
  align-items: center;
  justify-content: center;
`;

const SensorBody = styled.div`
  display: flex;
  margin-top: 12px;
  height: 141px;
`;

const SensorMain = styled.div`
  width: 715px;
  border-right: 1px solid #e4e6ea;
`;

const BeeLine = styled.div`
  text-align: center;
  font-size: 12.5px;
  line-height: 18px;
  color: #2b2d31;
  padding-right: 30px;
  b { font-weight: 600; }
`;

const SensorGrid = styled.div`
  display: grid;
  grid-template-columns: repeat(9, 79px);
  margin-top: 14px;
`;

const SensorCell = styled.div`
  display: flex;
  flex-direction: column;
  align-items: center;
`;

const IconSlot = styled.div`
  height: 24px;
  display: flex;
  align-items: center;
  justify-content: center;
`;

const SensorValue = styled.div`
  margin-top: 11px;
  height: 16px;
  font-size: 12.2px;
  line-height: 16px;
  color: #1f2126;
  white-space: nowrap;
`;

const SparkSvg = styled.svg`
  display: block;
  width: 57px;
  height: 24px;
  margin-top: 9px;
`;

const SensorCode = styled.div`
  margin-top: 8px;
  font-size: 12px;
  line-height: 14px;
  color: #a7b1bb;
`;

const ExtSummary = styled.div`
  flex: 1;
  display: flex;
  flex-direction: column;
  align-items: center;
  padding-left: 6px;
`;

const ExtTitle = styled.div`
  font-size: 12.5px;
  line-height: 18px;
  color: #2b2d31;
  margin-bottom: 14px;
`;

const MapCard = styled(Card)`
  position: relative;
  height: 355px;
  overflow: hidden;
`;

const MapSvg = styled.svg`
  display: block;
  width: 860px;
  height: 355px;
`;

const MapLabel = styled.text`
  font-family: ${FONT};
  font-size: ${({ $size }) => $size}px;
  font-weight: ${({ $weight }) => $weight || 400};
  fill: ${({ $color }) => $color || '#555a60'};
  text-anchor: ${({ $anchor }) => $anchor || 'middle'};
  paint-order: stroke;
  stroke: rgba(255, 255, 255, 0.85);
  stroke-width: 2px;
`;

const GoogleLogo = styled.text`
  font-family: "Liberation Sans", sans-serif;
  font-size: 16px;
  paint-order: stroke;
  stroke: #fff;
  stroke-width: 1.5px;
`;

const MapTabs = styled.div`
  position: absolute;
  left: 9px;
  top: 9px;
  height: 35px;
  display: flex;
  background: #fff;
  box-shadow: 0 1px 3px rgba(0, 0, 0, 0.2);
  border-radius: 2px;
`;

const MapTab = styled.div`
  display: flex;
  align-items: center;
  justify-content: center;
  width: ${({ $active }) => ($active ? '62px' : '89px')};
  font-size: 15px;
  font-weight: ${({ $active }) => ($active ? 500 : 400)};
  color: ${({ $active }) => ($active ? '#111' : '#666')};
  border-right: ${({ $active }) => ($active ? '1px solid #eee' : 'none')};
`;

const MapControls = styled.div`
  position: absolute;
  right: 9px;
  top: 9px;
  width: 35px;
  display: flex;
  flex-direction: column;
`;

const MapControl = styled.div`
  height: ${({ $h }) => $h || 35}px;
  background: #fff;
  display: flex;
  align-items: center;
  justify-content: center;
  box-shadow: 0 1px 2px rgba(0, 0, 0, 0.15);
`;

const MapSpacer = styled.div`
  height: ${({ $h }) => $h}px;
`;

const Attribution = styled.div`
  position: absolute;
  right: 0;
  bottom: 0;
  height: 13px;
  display: flex;
  gap: 1px;
`;

const AttrCell = styled.div`
  padding: 0 5px;
  background: rgba(255, 255, 255, 0.72);
  font-size: 9px;
  line-height: 13px;
  color: #222;
`;

const AlertsPanel = styled(Card)`
  position: relative;
  width: 361px;
  height: 774px;
  flex: none;
  margin-left: 1px;
  overflow: hidden;
`;

const AlertsHead = styled.div`
  height: 45px;
  display: flex;
  align-items: center;
  justify-content: space-between;
  padding: 0 18px 0 16px;
`;

const AlertsTitle = styled.h3`
  margin: 0;
  font-size: 17px;
  font-weight: 700;
  color: #1a1c20;
`;

const AlertsTools = styled.div`
  height: 50px;
  display: flex;
  align-items: center;
  padding: 0 28px 0 5px;
  margin-bottom: 7px;
`;

const FilterSelect = styled.div`
  width: 122px;
  height: 30px;
  border: 1px solid #dfe0e4;
  border-radius: 8px;
  display: flex;
  align-items: center;
  justify-content: space-between;
  padding: 0 3px 0 16px;
  font-size: 13px;
  color: #2b2d31;
`;

const SortSlot = styled.div`
  position: relative;
  top: ${({ $top }) => $top}px;
  margin-left: ${({ $left }) => $left}px;
  display: flex;
`;

const AlertList = styled.div`
  position: relative;
  display: flex;
  flex-direction: column;
  gap: 8.25px;
  padding: 0 12px 0 8px;
`;

const ListScrollbar = styled.div`
  position: absolute;
  right: 1px;
  top: -4px;
  width: 3px;
  height: 28px;
  background: #d8dae0;
  border-radius: 2px;
`;

const AlertItem = styled.article`
  flex: none;
  height: ${({ $tall }) => ($tall ? '73px' : '61px')};
  background: ${({ $bg }) => $bg};
  display: flex;
  justify-content: space-between;
  padding: 7px 0 0 5px;
`;

const AlertText = styled.div`
  display: flex;
  flex-direction: column;
`;

const AlertTime = styled.div`
  margin-top: 1px;
  font-size: 11px;
  letter-spacing: -0.12px;
  line-height: 14px;
  font-weight: 500;
  color: #1f2126;
`;

const AlertName = styled.div`
  margin-top: 5px;
  font-size: 15.8px;
  line-height: 20px;
  font-weight: 600;
  color: #14161a;
`;

const AlertDesc = styled.div`
  margin-top: 4px;
  font-size: 11px;
  letter-spacing: -0.1px;
  line-height: 14px;
  font-weight: 500;
  color: #1f2126;
`;

const AlertSide = styled.div`
  width: 112px;
  display: flex;
  flex-direction: column;
  justify-content: flex-end;
  padding-bottom: 6px;
`;

const BatteryRow = styled.div`
  display: flex;
  gap: 17px;
  font-size: 13px;
  line-height: 16px;
  font-weight: 500;
  color: #1f2126;
  span:first-child { width: 45px; }
`;

const AlertChevron = styled.div`
  display: flex;
  justify-content: flex-end;
  padding: 5px 15px 0 0;
`;
